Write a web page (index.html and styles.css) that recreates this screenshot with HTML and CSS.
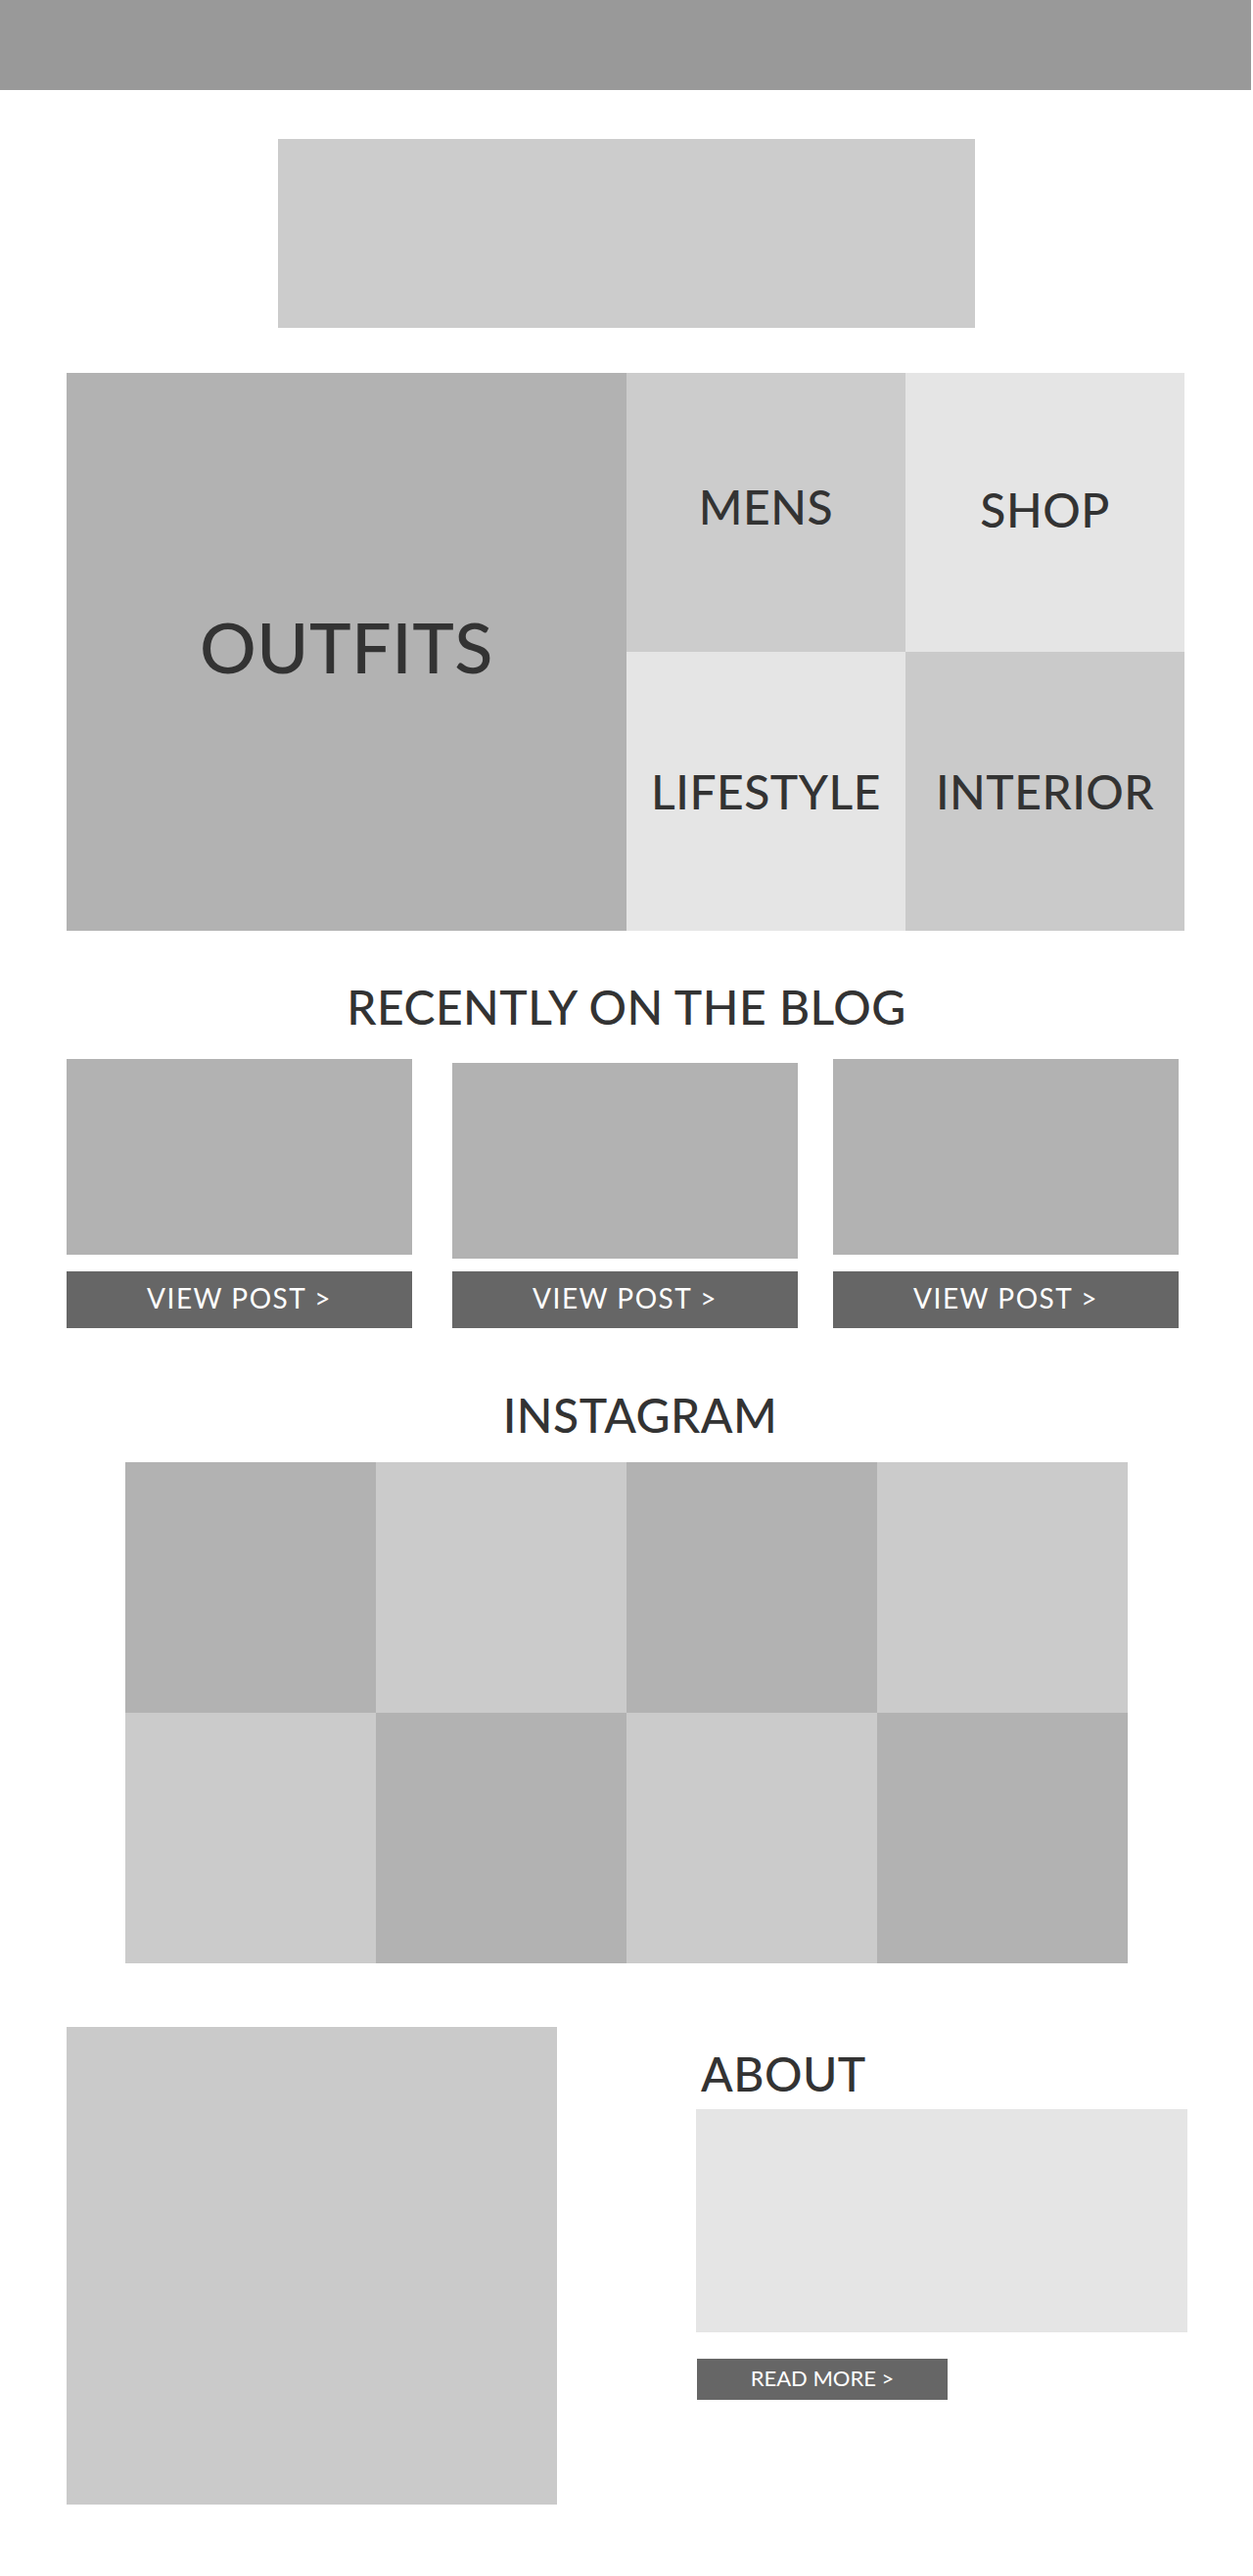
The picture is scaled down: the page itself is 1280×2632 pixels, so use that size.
FILE: index.html
```html
<!DOCTYPE html>
<html lang="en">
<head>
<meta charset="utf-8">
<title>Blog wireframe</title>
<link rel="stylesheet" href="styles.css">
</head>
<body>
  <header class="topbar"></header>

  <div class="logo"></div>

  <nav class="categories">
    <a class="tile tile-outfits">OUTFITS</a>
    <a class="tile tile-mens">MENS</a>
    <a class="tile tile-shop">SHOP</a>
    <a class="tile tile-lifestyle">LIFESTYLE</a>
    <a class="tile tile-interior">INTERIOR</a>
  </nav>

  <section class="blog">
    <h2 class="section-title">RECENTLY ON THE BLOG</h2>
    <div class="posts">
      <article class="post post-1">
        <div class="post-image"></div>
        <a class="btn btn-view">VIEW POST &gt;</a>
      </article>
      <article class="post post-2">
        <div class="post-image"></div>
        <a class="btn btn-view">VIEW POST &gt;</a>
      </article>
      <article class="post post-3">
        <div class="post-image"></div>
        <a class="btn btn-view">VIEW POST &gt;</a>
      </article>
    </div>
  </section>

  <section class="instagram">
    <h2 class="section-title insta-title">INSTAGRAM</h2>
    <div class="insta-grid">
      <div class="cell dark"></div>
      <div class="cell light"></div>
      <div class="cell dark"></div>
      <div class="cell light"></div>
      <div class="cell light"></div>
      <div class="cell dark"></div>
      <div class="cell light"></div>
      <div class="cell dark"></div>
    </div>
  </section>

  <section class="about">
    <div class="about-photo"></div>
    <div class="about-body">
      <h2 class="about-title">ABOUT</h2>
      <div class="about-text"></div>
      <a class="btn btn-read">READ MORE &gt;</a>
    </div>
  </section>
</body>
</html>
```

FILE: styles.css
```css
* { box-sizing: border-box; }

html, body {
  margin: 0;
  padding: 0;
  background: #ffffff;
}

body {
  font-family: "Lato", "Open Sans", "Liberation Sans", sans-serif;
  color: #333333;
  padding-bottom: 73px;
}

.topbar {
  height: 92px;
  width: calc(100% - 2px);
  background: #999999;
}

.logo {
  width: 712px;
  height: 193px;
  margin: 50px 0 0 284px;
  background: #cccccc;
}

/* Category mosaic */
.categories {
  display: grid;
  grid-template-columns: 572px 285px 285px;
  grid-template-rows: 285px 285px;
  width: 1142px;
  margin: 46px 0 0 68px;
}

.tile {
  display: flex;
  align-items: center;
  justify-content: center;
  font-size: 48px;
  line-height: 1.2;
  font-weight: 500;
  color: #333333;
  text-decoration: none;
  letter-spacing: 0.5px;
}

.tile-outfits {
  grid-row: 1 / span 2;
  background: #b2b2b2;
  font-size: 72px;
  padding-bottom: 12px;
}
.tile-mens { background: #cccccc; padding-bottom: 12px; }
.tile-shop { background: #e5e5e5; padding-bottom: 6px; }
.tile-lifestyle { background: #e5e5e5; }
.tile-interior { background: #cacaca; }

/* Section titles */
.section-title {
  margin: 0;
  font-size: 48px;
  line-height: 1.2;
  font-weight: 500;
  text-align: center;
  letter-spacing: 0.5px;
}

.blog { margin-top: 49px; }

.posts {
  display: flex;
  margin: 24px 0 0 68px;
}

.post {
  display: flex;
  flex-direction: column;
  width: 353px;
}
.post-2 { margin-left: 41px; }
.post-3 { margin-left: 36px; }

.post-image {
  height: 200px;
  background: #b2b2b2;
  margin-bottom: 17px;
}
.post-2 .post-image {
  margin-top: 4px;
  margin-bottom: 13px;
}

.btn {
  display: flex;
  align-items: center;
  justify-content: center;
  background: #666666;
  color: #ffffff;
  text-decoration: none;
}

.btn-view {
  height: 58px;
  font-size: 28px;
  letter-spacing: 1.5px;
  padding-bottom: 3px;
}

/* Instagram */
.instagram { margin-top: 60px; }

.insta-title { padding-left: 28px; }

.insta-grid {
  display: grid;
  grid-template-columns: repeat(4, 256px);
  grid-template-rows: repeat(2, 256px);
  margin: 20px 0 0 128px;
}

.cell.dark { background: #b2b2b2; }
.cell.light { background: #cbcbcb; }

/* About */
.about {
  display: flex;
  align-items: flex-start;
  margin: 65px 0 0 68px;
}

.about-photo {
  width: 501px;
  height: 488px;
  background: #cacaca;
}

.about-body {
  display: flex;
  flex-direction: column;
  align-items: flex-start;
  margin: 19px 0 0 142px;
}

.about-title {
  margin: 0 0 7px 5px;
  font-size: 48px;
  line-height: 1.2;
  font-weight: 500;
  letter-spacing: 0.5px;
}

.about-text {
  width: 502px;
  height: 228px;
  background: #e5e5e5;
}

.btn-read {
  width: 256px;
  height: 42px;
  margin: 27px 0 0 1px;
  font-size: 22px;
  padding-bottom: 2px;
}
```
